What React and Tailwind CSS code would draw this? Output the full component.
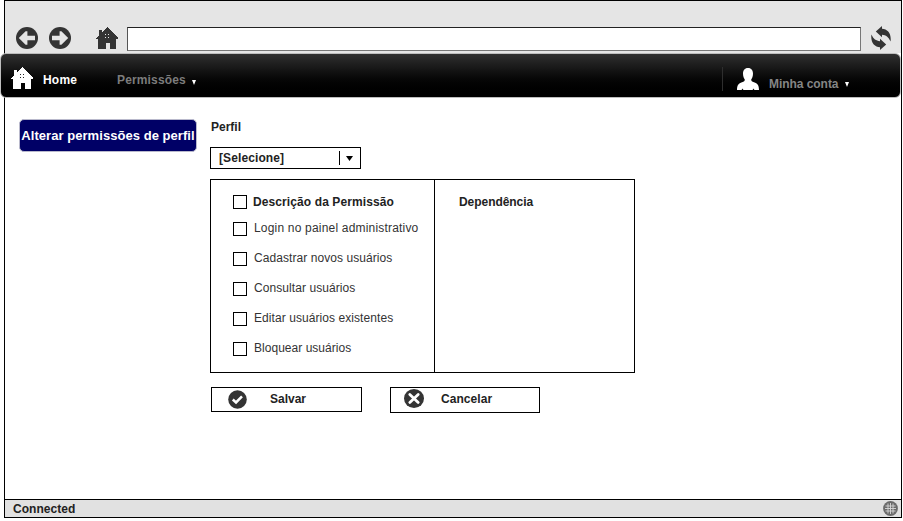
const HOUSE =
  'M11 0 L22 11 L22 12 L20 12 L20 22 L13.5 22 L13.5 15.5 L9.5 15.5 L9.5 22 L2 22 L2 12 L0 12 L0 11 L3 8 L3 2.5 L6 2.5 L6 5 Z';

function House({ fill, dot }) {
  return (
    <svg className="block h-[22px] w-[22px] shrink-0" viewBox="0 0 22 22" shapeRendering="crispEdges">
      <path d={HOUSE} fill={fill} />
      {[7, 10].map((y) =>
        [9, 12].map((x) => <rect key={`${x}-${y}`} x={x} y={y} width="1" height="1" fill={dot} />)
      )}
    </svg>
  );
}

function ArrowCircle({ flip }) {
  return (
    <svg className={flip ? 'block h-[22px] w-[22px] -scale-x-100' : 'block h-[22px] w-[22px]'} viewBox="0 0 22 22">
      <circle cx="11" cy="11" r="11" fill="#343434" />
      <path d="M2.8 11 L9.6 4.2 L11.4 4.2 L11.4 8.8 L19 8.8 L19 13.2 L11.4 13.2 L11.4 17.8 L9.6 17.8 Z" fill="#e5e5e5" />
    </svg>
  );
}

function Caret({ className }) {
  return (
    <svg className={`block h-[5px] ${className}`} viewBox="0 0 8 5" preserveAspectRatio="none">
      <path d="M0 0 H8 L4 5 Z" fill="currentColor" />
    </svg>
  );
}

function Box() {
  return <span className="block h-[14px] w-[14px] shrink-0 border border-black bg-white" />;
}

function Toolbar() {
  return (
    <div className="flex h-[52px] bg-[#e5e5e5] pt-[26px]">
      <div className="ml-[11px]"><ArrowCircle /></div>
      <div className="ml-[11px]"><ArrowCircle flip /></div>
      <div className="ml-[25px]"><House fill="#343434" dot="#e5e5e5" /></div>
      <div className="ml-[9px] h-[24px] w-[734px] border border-t-[#222] border-r-[#777] border-b-[#777] border-l-[#555] bg-white" />
      <svg className="-mt-[1px] ml-[10px] block h-[24px] w-[20px]" viewBox="0 0 20 24">
        <path d="M4.800 5.600 L11 0 L11 2.800 C16.500 3 20.500 7.500 19.600 15.500 C17.500 11 15 9.200 11 8.800 L11 11.200 Z" fill="#343434" />
        <path d="M15.200 18.400 L9 24 L9 21.200 C3.500 21 -0.500 16.500 0.400 8.500 C2.500 13 5 14.800 9 15.200 L9 12.800 Z" fill="#343434" />
      </svg>
    </div>
  );
}

function NavBar() {
  return (
    <div className="relative -ml-[5px] flex h-[45px] w-[901px] shrink-0 rounded-[6px] border border-[#bdbdbd] bg-linear-to-b from-[#303030] to-black">
      <div className="mt-[13px] ml-[10px]"><House fill="#ffffff" dot="#222222" /></div>
      <span className="mt-[19px] ml-[10px] w-[74px] text-[12px] leading-[14px] tracking-[0.2px] text-white">Home</span>
      <span className="mt-[19px] w-[75px] text-[12px] leading-[14px] tracking-[0.15px] text-[#7c7c7c]">Permissões</span>
      <span className="mt-[26px] text-white"><Caret className="w-[4px]" /></span>
      <span className="mt-[13px] ml-[526px] h-[24px] w-px bg-[#2e2e2e]" />
      <svg className="mt-[14px] ml-[14px] block h-[22px] w-[22px]" viewBox="0 0 22 22">
        <path d="M11 0 C14.500 0 16 2.500 16 5.500 C16 8.500 15 10.500 14.200 11.500 C14.200 13 15 13.500 17 14.200 C20.500 15.200 22 17.500 22 22 L0 22 C0 17.500 1.500 15.200 5 14.200 C7 13.500 7.800 13 7.800 11.500 C7 10.500 6 8.500 6 5.500 C6 2.500 7.500 0 11 0 Z" fill="#fff" />
        <path d="M4.500 22 L5.500 20.500 L6.500 22 Z M15.500 22 L16.500 20.500 L17.500 22 Z" fill="#111" />
      </svg>
      <span className="mt-[23px] ml-[10px] w-[76px] text-[12px] leading-[14px] tracking-[-0.05px] text-[#858585]">Minha conta</span>
      <span className="mt-[28px] text-white"><Caret className="w-[4px]" /></span>
    </div>
  );
}

const permissions = [
  { label: 'Login no painel administrativo', tracking: 'tracking-[0.19px]' },
  { label: 'Cadastrar novos usuários', tracking: 'tracking-[0.07px]' },
  { label: 'Consultar usuários', tracking: 'tracking-[0.07px]' },
  { label: 'Editar usuários existentes', tracking: 'tracking-[0.07px]' },
  { label: 'Bloquear usuários', tracking: 'tracking-[0.03px]' },
];

function PermissionTable() {
  return (
    <div className="mt-[10px] flex h-[194px] w-[425px] border border-black">
      <div className="w-[224px] border-r border-black pt-[15px] pl-[22px]">
        <div className="flex h-[27px]">
          <Box />
          <span className="ml-[6px] text-[12px] leading-[14px] tracking-[0.1px] whitespace-nowrap">Descrição da Permissão</span>
        </div>
        {permissions.map(({ label, tracking }) => (
          <div key={label} className="flex h-[30px]">
            <Box />
            <span className={`-mt-[1px] ml-[7px] text-[12px] leading-[14px] font-normal whitespace-nowrap text-[#333] ${tracking}`}>{label}</span>
          </div>
        ))}
      </div>
      <span className="mt-[15px] ml-[24px] text-[12px] leading-[14px] tracking-[-0.05px]">Dependência</span>
    </div>
  );
}

export default function App() {
  return (
    <div className="h-[521px] w-[903px] overflow-hidden bg-white font-['Liberation_Sans',Arial,sans-serif] text-[12px] font-bold text-[#222]">
      <div className="ml-[4px] flex h-[518px] w-[898px] flex-col border border-black">
        <Toolbar />
        <NavBar />
        <main className="flex flex-1">
          <div className="mt-[21px] ml-[14px] flex h-[33px] w-[178px] shrink-0 items-center justify-center rounded-[5px] border border-[#b9b9cc] bg-[#000066] text-[13px] tracking-[0.05px] whitespace-nowrap text-white">
            Alterar permissões de perfil
          </div>
          <div className="ml-[13px] pt-[22px]">
            <div className="ml-[1px] h-[27px] text-[12px] leading-[14px]">Perfil</div>
            <div className="flex h-[22px] w-[151px] border border-black">
              <span className="mt-[3px] ml-[8px] w-[120px] leading-[14px] tracking-[0.1px]">[Selecione]</span>
              <span className="mt-[3px] h-[14px] w-px bg-black" />
              <span className="mt-[8px] ml-[6px] text-black"><Caret className="w-[7px]" /></span>
            </div>
            <PermissionTable />
            <div className="mt-[14px] ml-[1px] flex items-start">
              <div className="flex h-[25px] w-[151px] border border-black">
                <svg className="mt-[2px] ml-[16px] block h-[19px] w-[19px]" viewBox="0 0 19 19">
                  <circle cx="9.5" cy="9.5" r="9.3" fill="#343434" />
                  <path d="M4.8 9.600 L8 12.400 L14 6.400" fill="none" stroke="#fff" strokeWidth="2.600" />
                </svg>
                <span className="mt-[4px] ml-[23px] leading-[14px]">Salvar</span>
              </div>
              <div className="ml-[28px] flex h-[26px] w-[150px] border border-black">
                <svg className="mt-px ml-[13px] block h-[19px] w-[20px]" viewBox="0 0 20 19">
                  <ellipse cx="10" cy="9.5" rx="10" ry="9.4" fill="#343434" />
                  <path d="M5.800 5.400 L14.200 13.400 M14.200 5.400 L5.800 13.400" stroke="#fff" strokeWidth="2.800" strokeLinecap="round" />
                </svg>
                <span className="mt-[4px] ml-[17px] leading-[14px] tracking-[0.05px]">Cancelar</span>
              </div>
            </div>
          </div>
        </main>
        <footer className="flex h-[18px] shrink-0 items-center justify-between border-t border-black bg-[#e1e1e1] pr-[3px] pl-[8px]">
          <span className="leading-[14px] tracking-[0.05px]">Connected</span>
          <svg className="block h-[15px] w-[15px]" viewBox="0 0 15 15">
            <circle cx="7.5" cy="7.5" r="7.400" fill="#6a6a6a" />
            <path d="M2.500 5 H12.500 M2 7.500 H13 M2.500 10 H12.500 M5 2.500 V12.500 M7.500 2 V13 M10 2.500 V12.500" stroke="#d8d8d8" strokeWidth="0.900" />
          </svg>
        </footer>
      </div>
    </div>
  );
}
